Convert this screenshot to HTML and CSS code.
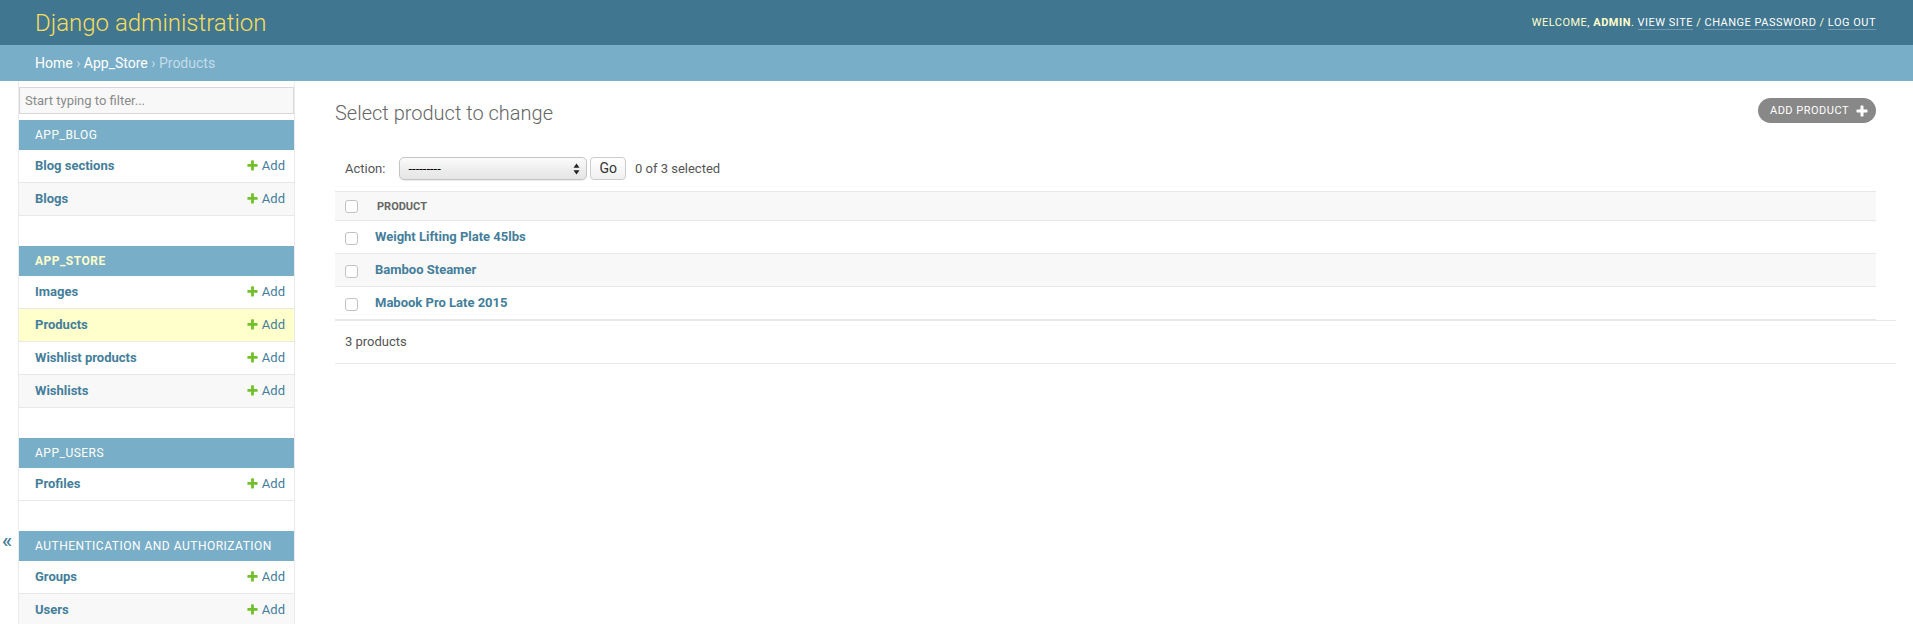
FILE: index.html
```html
<!DOCTYPE html>
<html lang="en">
<head>
<meta charset="utf-8">
<title>Select product to change | Django site admin</title>
<link rel="stylesheet" href="styles.css">
</head>
<body>
<div class="container">
  <header class="header">
    <h1 class="branding">Django administration</h1>
    <div class="user-tools">
      Welcome, <strong>admin</strong>. <a href="#">View site</a> / <a href="#">Change password</a> / <a href="#">Log out</a>
    </div>
  </header>
  <nav class="breadcrumbs">
    <a href="#">Home</a> › <a href="#">App_Store</a> › Products
  </nav>
  <div class="main">
    <button class="toggle-nav" type="button" aria-label="Toggle navigation"><span class="toggle-glyph">«</span></button>
    <aside class="nav-sidebar">
      <input class="nav-filter" type="search" placeholder="Start typing to filter...">
      <div class="module">
        <div class="caption">App_Blog</div>
        <div class="row"><a class="model" href="#">Blog sections</a><a class="addlink" href="#"><svg width="13" height="13" viewBox="0 0 1792 1792"><path fill="#70bf2b" d="M1600 796v192q0 40-28 68t-68 28h-416v416q0 40-28 68t-68 28h-192q-40 0-68-28t-28-68v-416h-416q-40 0-68-28t-28-68v-192q0-40 28-68t68-28h416v-416q0-40 28-68t68-28h192q40 0 68 28t28 68v416h416q40 0 68 28t28 68z"/></svg>Add</a></div>
        <div class="row alt"><a class="model" href="#">Blogs</a><a class="addlink" href="#"><svg width="13" height="13" viewBox="0 0 1792 1792"><path fill="#70bf2b" d="M1600 796v192q0 40-28 68t-68 28h-416v416q0 40-28 68t-68 28h-192q-40 0-68-28t-28-68v-416h-416q-40 0-68-28t-28-68v-192q0-40 28-68t68-28h416v-416q0-40 28-68t68-28h192q40 0 68 28t28 68v416h416q40 0 68 28t28 68z"/></svg>Add</a></div>
      </div>
      <div class="module">
        <div class="caption current">App_Store</div>
        <div class="row"><a class="model" href="#">Images</a><a class="addlink" href="#"><svg width="13" height="13" viewBox="0 0 1792 1792"><path fill="#70bf2b" d="M1600 796v192q0 40-28 68t-68 28h-416v416q0 40-28 68t-68 28h-192q-40 0-68-28t-28-68v-416h-416q-40 0-68-28t-28-68v-192q0-40 28-68t68-28h416v-416q0-40 28-68t68-28h192q40 0 68 28t28 68v416h416q40 0 68 28t28 68z"/></svg>Add</a></div>
        <div class="row current-model"><a class="model" href="#">Products</a><a class="addlink" href="#"><svg width="13" height="13" viewBox="0 0 1792 1792"><path fill="#70bf2b" d="M1600 796v192q0 40-28 68t-68 28h-416v416q0 40-28 68t-68 28h-192q-40 0-68-28t-28-68v-416h-416q-40 0-68-28t-28-68v-192q0-40 28-68t68-28h416v-416q0-40 28-68t68-28h192q40 0 68 28t28 68v416h416q40 0 68 28t28 68z"/></svg>Add</a></div>
        <div class="row"><a class="model" href="#">Wishlist products</a><a class="addlink" href="#"><svg width="13" height="13" viewBox="0 0 1792 1792"><path fill="#70bf2b" d="M1600 796v192q0 40-28 68t-68 28h-416v416q0 40-28 68t-68 28h-192q-40 0-68-28t-28-68v-416h-416q-40 0-68-28t-28-68v-192q0-40 28-68t68-28h416v-416q0-40 28-68t68-28h192q40 0 68 28t28 68v416h416q40 0 68 28t28 68z"/></svg>Add</a></div>
        <div class="row alt"><a class="model" href="#">Wishlists</a><a class="addlink" href="#"><svg width="13" height="13" viewBox="0 0 1792 1792"><path fill="#70bf2b" d="M1600 796v192q0 40-28 68t-68 28h-416v416q0 40-28 68t-68 28h-192q-40 0-68-28t-28-68v-416h-416q-40 0-68-28t-28-68v-192q0-40 28-68t68-28h416v-416q0-40 28-68t68-28h192q40 0 68 28t28 68v416h416q40 0 68 28t28 68z"/></svg>Add</a></div>
      </div>
      <div class="module">
        <div class="caption">App_Users</div>
        <div class="row"><a class="model" href="#">Profiles</a><a class="addlink" href="#"><svg width="13" height="13" viewBox="0 0 1792 1792"><path fill="#70bf2b" d="M1600 796v192q0 40-28 68t-68 28h-416v416q0 40-28 68t-68 28h-192q-40 0-68-28t-28-68v-416h-416q-40 0-68-28t-28-68v-192q0-40 28-68t68-28h416v-416q0-40 28-68t68-28h192q40 0 68 28t28 68v416h416q40 0 68 28t28 68z"/></svg>Add</a></div>
      </div>
      <div class="module">
        <div class="caption">Authentication and Authorization</div>
        <div class="row"><a class="model" href="#">Groups</a><a class="addlink" href="#"><svg width="13" height="13" viewBox="0 0 1792 1792"><path fill="#70bf2b" d="M1600 796v192q0 40-28 68t-68 28h-416v416q0 40-28 68t-68 28h-192q-40 0-68-28t-28-68v-416h-416q-40 0-68-28t-28-68v-192q0-40 28-68t68-28h416v-416q0-40 28-68t68-28h192q40 0 68 28t28 68v416h416q40 0 68 28t28 68z"/></svg>Add</a></div>
        <div class="row alt"><a class="model" href="#">Users</a><a class="addlink" href="#"><svg width="13" height="13" viewBox="0 0 1792 1792"><path fill="#70bf2b" d="M1600 796v192q0 40-28 68t-68 28h-416v416q0 40-28 68t-68 28h-192q-40 0-68-28t-28-68v-416h-416q-40 0-68-28t-28-68v-192q0-40 28-68t68-28h416v-416q0-40 28-68t68-28h192q40 0 68 28t28 68v416h416q40 0 68 28t28 68z"/></svg>Add</a></div>
      </div>
    </aside>
    <main class="content">
      <div class="title-row">
        <h1 class="page-title">Select product to change</h1>
        <a class="object-tool" href="#">Add product<svg width="14" height="14" viewBox="0 0 1792 1792"><path fill="#fff" d="M1600 796v192q0 40-28 68t-68 28h-416v416q0 40-28 68t-68 28h-192q-40 0-68-28t-28-68v-416h-416q-40 0-68-28t-28-68v-192q0-40 28-68t68-28h416v-416q0-40 28-68t68-28h192q40 0 68 28t28 68v416h416q40 0 68 28t28 68z"/></svg></a>
      </div>
      <form class="changelist">
        <div class="actions">
          <label class="action-label">Action:</label>
          <span class="select-wrap">
            <select class="action-select"><option>---------</option></select>
            <svg class="select-arrows" width="7" height="12" viewBox="0 0 7 12"><path d="M3.5 0.5 L6.5 4.8 H0.5 Z M3.5 11.5 L6.5 7.2 H0.5 Z" fill="#222"/></svg>
          </span>
          <button class="go-button" type="button">Go</button>
          <span class="action-counter">0 of 3 selected</span>
        </div>
        <table class="results">
          <thead>
            <tr>
              <th class="check-col"><input class="check" type="checkbox"></th>
              <th class="col-head">Product</th>
            </tr>
          </thead>
          <tbody>
            <tr><td class="check-col"><input class="check" type="checkbox"></td><th class="field-name"><a href="#">Weight Lifting Plate 45lbs</a></th></tr>
            <tr class="alt"><td class="check-col"><input class="check" type="checkbox"></td><th class="field-name"><a href="#">Bamboo Steamer</a></th></tr>
            <tr><td class="check-col"><input class="check" type="checkbox"></td><th class="field-name"><a href="#">Mabook Pro Late 2015</a></th></tr>
          </tbody>
        </table>
        <p class="paginator">3 products</p>
      </form>
    </main>
  </div>
</div>
</body>
</html>
```

FILE: styles.css
```css
* { box-sizing: border-box; }

html, body {
  margin: 0;
  padding: 0;
}

body {
  font-family: Roboto, "Lucida Grande", "Liberation Sans", sans-serif;
  font-size: 14px;
  color: #333;
  background: #fff;
}

a { text-decoration: none; color: #447e9b; }

/* Header */
.header {
  display: flex;
  justify-content: space-between;
  align-items: center;
  height: 45px;
  padding: 0 37px 0 35px;
  background: #417690;
  color: #ffc;
}

.branding {
  margin: 0;
  font-weight: 300;
  font-size: 24px;
  color: #f5dd5d;
  line-height: 28px;
}

.user-tools {
  font-size: 11px;
  letter-spacing: 0.5px;
  text-transform: uppercase;
  color: #ffc;
  line-height: 14px;
}

.user-tools strong { font-weight: 700; }

.user-tools a {
  color: #fff;
  border-bottom: 1px solid rgba(255, 255, 255, 0.25);
}

/* Breadcrumbs */
.breadcrumbs {
  height: 36px;
  padding: 10px 35px;
  background: #79aec8;
  color: #c4dce8;
  font-size: 14px;
  line-height: 16px;
}

.breadcrumbs a { color: #fff; }

/* Main */
.main {
  display: flex;
  align-items: stretch;
}

.toggle-nav {
  flex: 0 0 19px;
  width: 19px;
  border: 0;
  border-right: 1px solid #eaeaea;
  background: #fff;
  padding: 447px 0 0 0;
  margin: 0;
  display: flex;
  justify-content: center;
  align-items: flex-start;
  font-family: Roboto, sans-serif;
  font-size: 21px;
  line-height: 24px;
  font-weight: 500;
  color: #447e9b;
}

.toggle-glyph { margin-left: -4px; }

.nav-sidebar {
  flex: 0 0 276px;
  width: 276px;
  border-right: 1px solid #eaeaea;
  border-top: 1px solid transparent;
  padding-bottom: 10px;
}

.nav-filter {
  display: block;
  width: 100%;
  height: 27px;
  margin: 5px 0 6px;
  padding: 2px 5px;
  border: 1px solid #d8d8d8;
  background: #f8f8f8;
  color: #333;
  font-family: Roboto, sans-serif;
  font-size: 13px;
  outline: none;
  -webkit-appearance: none;
  appearance: none;
  border-radius: 0;
}

.nav-filter::placeholder { color: #8a8a8a; }

.module { margin-bottom: 30px; }

.caption {
  padding: 8px 16px;
  background: #79aec8;
  color: #fff;
  font-size: 12px;
  line-height: 14px;
  letter-spacing: 0.5px;
  text-transform: uppercase;
}

.caption.current { color: #ffc; font-weight: 700; }

.row {
  display: flex;
  justify-content: space-between;
  align-items: flex-start;
  padding: 8px 9px 8px 16px;
  border-bottom: 1px solid #e8e8e8;
  font-size: 13px;
  line-height: 16px;
  background: #fff;
}

.row.alt { background: #f8f8f8; }
.row.current-model { background: #ffc; }

.model { font-weight: 700; color: #447e9b; }

.addlink {
  display: flex;
  align-items: flex-start;
  color: #447e9b;
}

.addlink svg {
  margin: 1px 3px 0 0;
}

/* Content */
.content {
  flex: 1 1 auto;
  min-width: 0;
  padding: 17px 37px 20px 40px;
}

.title-row {
  display: flex;
  justify-content: space-between;
  align-items: flex-start;
}

.page-title {
  margin: 3px 0 20px;
  font-size: 20px;
  line-height: 24px;
  font-weight: 300;
  color: #666;
}

.object-tool {
  display: flex;
  align-items: center;
  height: 25px;
  padding: 0 7px 0 12px;
  border-radius: 15px;
  background: #888;
  color: #fff;
  font-size: 11px;
  letter-spacing: 0.5px;
  text-transform: uppercase;
}

.object-tool svg { margin-left: 6px; }

.changelist { margin: 0; }

.actions {
  display: flex;
  align-items: center;
  height: 46px;
  padding: 0 10px;
  color: #555;
  font-size: 13px;
}

.select-wrap {
  position: relative;
  display: inline-block;
  margin-left: 14px;
  height: 23px;
}

.action-select {
  -webkit-appearance: none;
  appearance: none;
  width: 188px;
  height: 23px;
  padding: 0 0 0 8px;
  margin: 0;
  border: 1px solid #c4c4c4;
  border-radius: 5px;
  background: linear-gradient(#fbfbfb, #ececec 60%, #e6e6e6);
  box-shadow: 0 1px 1px rgba(0, 0, 0, 0.08);
  font-family: Roboto, sans-serif;
  font-size: 13px;
  color: #000;
}

.select-arrows {
  position: absolute;
  right: 7px;
  top: 6px;
}

.go-button {
  height: 23px;
  margin: 0 0 0 3px;
  padding: 0 8px;
  border: 1px solid #ccc;
  border-radius: 4px;
  background: linear-gradient(#fff, #f0f0f0);
  font-family: Roboto, sans-serif;
  font-size: 14px;
  color: #333;
}

.action-counter { margin-left: 9px; }

.results {
  width: 100%;
  border-collapse: collapse;
}

.results thead th {
  height: 29px;
  padding: 0 8px;
  background: #f8f8f8;
  border-top: 1px solid #e8e8e8;
  border-bottom: 1px solid #e8e8e8;
  vertical-align: middle;
  text-align: left;
}

.results .col-head {
  font-size: 11px;
  font-weight: 700;
  text-transform: uppercase;
  color: #666;
}

.results .check-col {
  width: 32px;
  padding: 0 9px 0 10px;
}

.results thead .col-head { padding-left: 10px; }

.results tbody td,
.results tbody th {
  padding: 8px;
  border-bottom: 1px solid #e8e8e8;
  font-size: 13px;
  line-height: 16px;
  text-align: left;
  vertical-align: top;
  background: #fff;
}

.results tbody td.check-col { padding: 8px 9px 8px 10px; }

.results tbody tr.alt td,
.results tbody tr.alt th { background: #f8f8f8; }

.field-name a { font-weight: 700; color: #447e9b; }

.check {
  -webkit-appearance: none;
  appearance: none;
  display: block;
  width: 13px;
  height: 13px;
  margin: 0;
  border: 1px solid #c2c2c2;
  border-radius: 3px;
  background: #fff;
}

.results tbody .check { margin-top: 3px; }

.paginator {
  margin: 0 -20px 0 0;
  padding: 10px;
  line-height: 22px;
  font-size: 13px;
  color: #555;
  border-top: 1px solid #e8e8e8;
  border-bottom: 1px solid #e8e8e8;
}
```
